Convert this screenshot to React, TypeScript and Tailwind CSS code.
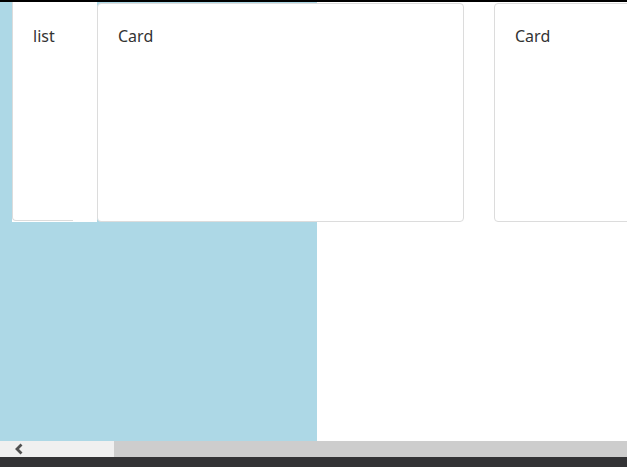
import React from 'react';

const Card = ({ label, className }: { label: string; className?: string }) => (
  <div
    className={`shrink-0 rounded-[4px] border border-[#dcdcdc] bg-white px-5 py-5 ${className ?? ''}`}
  >
    <p className="text-[16px] leading-6 text-[#333]">{label}</p>
  </div>
);

const App = () => {
  return (
    <div
      className="flex h-[467px] w-[627px] flex-col overflow-hidden bg-white"
      style={{ fontFamily: '"Noto Sans", "Open Sans", sans-serif' }}
    >
      {/* top edge */}
      <div className="h-[2px] shrink-0 bg-black" />

      {/* scroll area: blue panel behind a row of cards */}
      <div className="grid h-[439px] shrink-0 overflow-hidden">
        <div className="col-start-1 row-start-1 h-full w-[317px] bg-[#add8e6]" />

        <div className="col-start-1 row-start-1 flex items-start pl-[12px]">
          {/* list card, top edge scrolled out of view */}
          <div className="flex h-[220px] w-[85px] shrink-0 flex-col bg-white">
            <div className="w-[61px] flex-1 rounded-bl-[4px] border-b border-l border-[#dcdcdc] px-5 pt-[22px]">
              <p className="text-[16px] leading-6 text-[#333]">list</p>
            </div>
            <div className="h-px" />
          </div>

          <Card label="Card" className="mt-px h-[219px] w-[367px]" />
          <Card label="Card" className="ml-[30px] mt-px h-[219px] w-[367px]" />
        </div>
      </div>

      {/* horizontal scrollbar */}
      <div className="flex h-[16px] shrink-0 items-stretch bg-[#f0f0f0]">
        <div className="flex w-[114px] shrink-0 items-center pl-[13px]">
          <svg width="11" height="12" viewBox="0 0 11 12">
            <path d="M8.5 1.5 L4 6 L8.5 10.5" fill="none" stroke="#505050" strokeWidth="2.8" />
          </svg>
        </div>
        <div className="flex-1 bg-[#cdcdcd]" />
      </div>

      {/* bottom bar */}
      <div className="flex-1 bg-[#333335]" />
    </div>
  );
};

export default App;
